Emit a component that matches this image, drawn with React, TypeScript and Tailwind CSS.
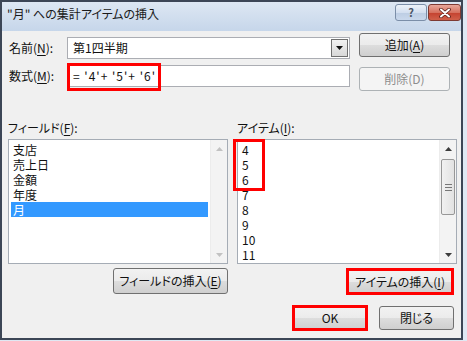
import type { ReactNode } from 'react';

const jp = "font-['Meiryo_UI','Noto_Sans_CJK_JP',sans-serif] [font-feature-settings:'palt']";

function Mn({ c }: { c: string }) {
  return <span className="underline underline-offset-[2px] decoration-1">{c}</span>;
}

function Btn({
  children,
  className = '',
  disabled = false,
  marked = false,
}: {
  children: ReactNode;
  className?: string;
  disabled?: boolean;
  marked?: boolean;
}) {
  return (
    <div
      className={`relative flex items-center justify-center rounded-[3px] border text-[12px] leading-[16px] ${
        disabled
          ? 'border-[#adb2b5] bg-[#f4f4f4] text-[#8d8d8d]'
          : 'border-[#707070] bg-[linear-gradient(#f2f2f2_0%,#ebebeb_50%,#dddddd_51%,#cfcfcf_100%)] text-[#111]'
      } ${className}`}
    >
      {children}
      {marked && <div className="absolute -inset-[2px] border-[3px] border-[#ff0000]" />}
    </div>
  );
}

function Arrow({ up, color }: { up: boolean; color: string }) {
  return (
    <svg width="7" height="4" viewBox="0 0 7 4">
      <path d={up ? 'M0 4 L3.5 0 L7 4 Z' : 'M0 0 L3.5 4 L7 0 Z'} fill={color} />
    </svg>
  );
}

function ListBox({
  rows,
  selected,
  active,
  children,
}: {
  rows: string[];
  selected?: string;
  active?: boolean;
  children?: ReactNode;
}) {
  const arrow = active ? '#3c3c3c' : '#c2c2c2';
  return (
    <div className="relative flex h-[125px] w-[220px] border border-[#a5acb5] bg-white">
      <div className="flex-1 overflow-hidden px-[2px] pt-[2px]">
        {rows.map(r => (
          <div
            key={r}
            className={`h-[15px] pl-[2px] text-[12px] leading-[15px] ${
              r === selected ? 'bg-[#3399ff] text-white' : 'text-[#111]'
            }`}
          >
            {r}
          </div>
        ))}
      </div>
      <div className="flex w-[17px] flex-col border-l border-[#ececec] bg-[#f3f3f3]">
        <div className="flex h-[17px] items-center justify-center">
          <Arrow up color={arrow} />
        </div>
        <div className="flex-1 px-[1px] pt-[2px]">
          {active && (
            <div className="flex h-[56px] flex-col items-center justify-center gap-[2px] rounded-[2px] border border-[#979797] bg-[linear-gradient(90deg,#f1f1f1,#e2e2e2)]">
              <div className="h-px w-[7px] bg-[#777]" />
              <div className="h-px w-[7px] bg-[#777]" />
              <div className="h-px w-[7px] bg-[#777]" />
            </div>
          )}
        </div>
        <div className="flex h-[17px] items-center justify-center">
          <Arrow up={false} color={arrow} />
        </div>
      </div>
      {children}
    </div>
  );
}

export default function App() {
  return (
    <div className={`h-[341px] w-[467px] bg-[#dfe8f3] ${jp}`}>
      <div className="flex h-[340px] w-[463px] flex-col border-2 border-[#3c4656] bg-[#f0f0f0]">
        {/* title bar */}
        <div className="flex h-[29px] items-start justify-between bg-[linear-gradient(#dde7f3,#c6d6ea)] pl-[5px]">
          <div className="pt-[4px] text-[12px] leading-[16px] text-[#1a1a1a]">"月" への集計アイテムの挿入</div>
          <div className="mt-[2px] flex gap-[1px]">
            <div className="flex h-[17px] w-[32px] items-center justify-center rounded-[3px] border border-[#7b8ea8] bg-[linear-gradient(#edf2f9,#d3dff0_50%,#bccde3_51%,#c9d8ec)] text-[11px] font-bold leading-none text-[#4b5566]">
              ?
            </div>
            <div className="flex h-[17px] w-[33px] items-center justify-center rounded-[3px] border border-[#7d3a33] bg-[linear-gradient(#e8a79a,#d6715f_50%,#c4412f_51%,#d0604a)]">
              <svg width="12" height="10" viewBox="0 0 12 10">
                <path d="M2 1.5 L10 8.5 M10 1.5 L2 8.5" stroke="#5a1e18" strokeWidth="3.6" strokeLinecap="round" />
                <path d="M2 1.5 L10 8.5 M10 1.5 L2 8.5" stroke="#fff" strokeWidth="2" strokeLinecap="round" />
              </svg>
            </div>
          </div>
        </div>

        {/* client */}
        <div className="flex-1 pl-[6px] pt-[2px] text-[#111]">
          <div className="flex">
            <div className="pt-[4px]">
              <div className="flex h-[22px] items-center">
                <div className="w-[59px] pl-[1px] text-[12px] leading-[16px]">
                  名前(<Mn c="N" />):
                </div>
                <div className="flex h-[22px] w-[283px] items-center border border-[#abadb3] bg-white pl-[5px] text-[12px]">
                  <span className="flex-1">第1四半期</span>
                  <div className="mr-[1px] flex h-[18px] w-[17px] items-center justify-center border border-[#707070] bg-[linear-gradient(#f2f2f2,#d8d8d8)]">
                    <Arrow up={false} color="#111" />
                  </div>
                </div>
              </div>
              <div className="mt-[6px] flex h-[22px] items-center">
                <div className="w-[59px] pl-[1px] text-[12px] leading-[16px]">
                  数式(<Mn c="M" />):
                </div>
                <div className="relative flex h-[22px] w-[283px] items-center border border-[#abadb3] bg-white pl-[5px] text-[12px] tracking-[1px]">
                  = '4'+ '5'+ '6'
                  <div className="absolute -left-px -top-[3px] h-[28px] w-[94px] border-[3px] border-[#ff0000]" />
                </div>
              </div>
            </div>
            <div className="ml-[9px]">
              <Btn className="h-[24px] w-[91px]">
                追加(<Mn c="A" />)
              </Btn>
              <Btn disabled className="mt-[10px] h-[24px] w-[91px]">
                削除(D)
              </Btn>
            </div>
          </div>

          <div className="mt-[29px] flex gap-[9px]">
            <div className="w-[220px]">
              <div className="h-[16px] text-[12px] leading-[16px]">
                フィールド(<Mn c="F" />):
              </div>
              <div className="mt-[3px]">
                <ListBox rows={['支店', '売上日', '金額', '年度', '月']} selected="月" />
              </div>
              <div className="mt-[4px] flex justify-end">
                <Btn className="h-[26px] w-[115px]">
                  フィールドの挿入(<Mn c="E" />)
                </Btn>
              </div>
            </div>
            <div className="w-[220px]">
              <div className="h-[16px] text-[12px] leading-[16px]">
                アイテム(<Mn c="I" />):
              </div>
              <div className="mt-[3px]">
                <ListBox rows={['4', '5', '6', '7', '8', '9', '10', '11']} active>
                  <div className="absolute -left-[5px] -top-px h-[52px] w-[32px] border-[3px] border-[#ff0000]" />
                </ListBox>
              </div>
              <div className="mt-[5px] flex justify-end pr-[4px]">
                <Btn marked className="h-[25px] w-[106px]">
                  アイテムの挿入(<Mn c="I" />)
                </Btn>
              </div>
            </div>
          </div>

          <div className="mt-[12px] flex justify-end gap-[12px] pr-[7px]">
            <Btn marked className="h-[24px] w-[74px]">
              OK
            </Btn>
            <Btn className="h-[24px] w-[75px]">閉じる</Btn>
          </div>
        </div>
      </div>
    </div>
  );
}
